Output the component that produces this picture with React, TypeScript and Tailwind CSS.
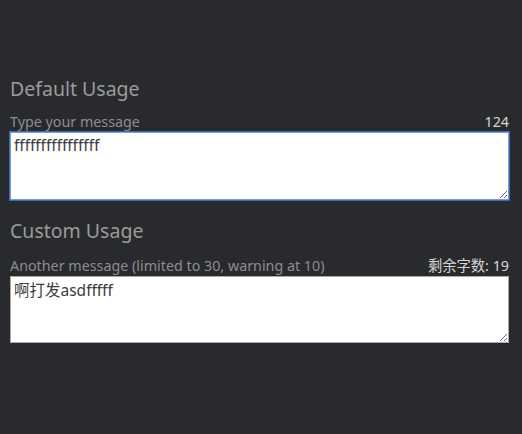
import React, { useState } from "react";

const font = { fontFamily: '"Noto Sans", "Noto Sans CJK SC", sans-serif' };

interface CounterFieldProps {
  label: string;
  value: string;
  max: number;
  prefix?: string;
  focused?: boolean;
}

const CounterField: React.FC<CounterFieldProps> = ({ label, value, max, prefix, focused }) => {
  const [text, setText] = useState(value);
  const left = max - text.length;
  return (
    <div>
      <div className="flex items-end justify-between text-[14.3px] leading-[20px]">
        <span className="text-[#8d8d8d]">{label}</span>
        <span className="text-[#d6d6d6]">
          {prefix}
          {left}
        </span>
      </div>
      <textarea
        value={text}
        maxLength={max}
        onChange={(e) => setText(e.target.value)}
        style={font}
        className={
          focused
            ? "block h-[68px] w-full resize-y border border-[#7a9ad2] bg-white px-[3px] py-[2px] text-[15.5px] leading-[20px] text-[#3b3b3b] outline outline-1 outline-[#3c6ab8]"
            : "block h-[67px] w-full resize-y border border-[#a9a9a9] bg-white px-[3px] py-[3px] text-[15.5px] leading-[20px] text-[#3b3b3b] outline-none"
        }
      />
    </div>
  );
};

export default function App() {
  return (
    <div style={font} className="min-h-screen bg-[#292a2d] pl-[10px] pr-[13px] pt-[75px]">
      <h2 className="mb-[9px] text-[19.5px] leading-[28px] text-[#9b9b9b]">Default Usage</h2>
      <CounterField label="Type your message" value="ffffffffffffffff" max={140} focused />
      <h2 className="mb-[11px] mt-[17px] text-[19.5px] leading-[28px] text-[#9b9b9b]">Custom Usage</h2>
      <CounterField
        label="Another message (limited to 30, warning at 10)"
        value="啊打发asdfffff"
        max={30}
        prefix="剩余字数: "
      />
    </div>
  );
}
